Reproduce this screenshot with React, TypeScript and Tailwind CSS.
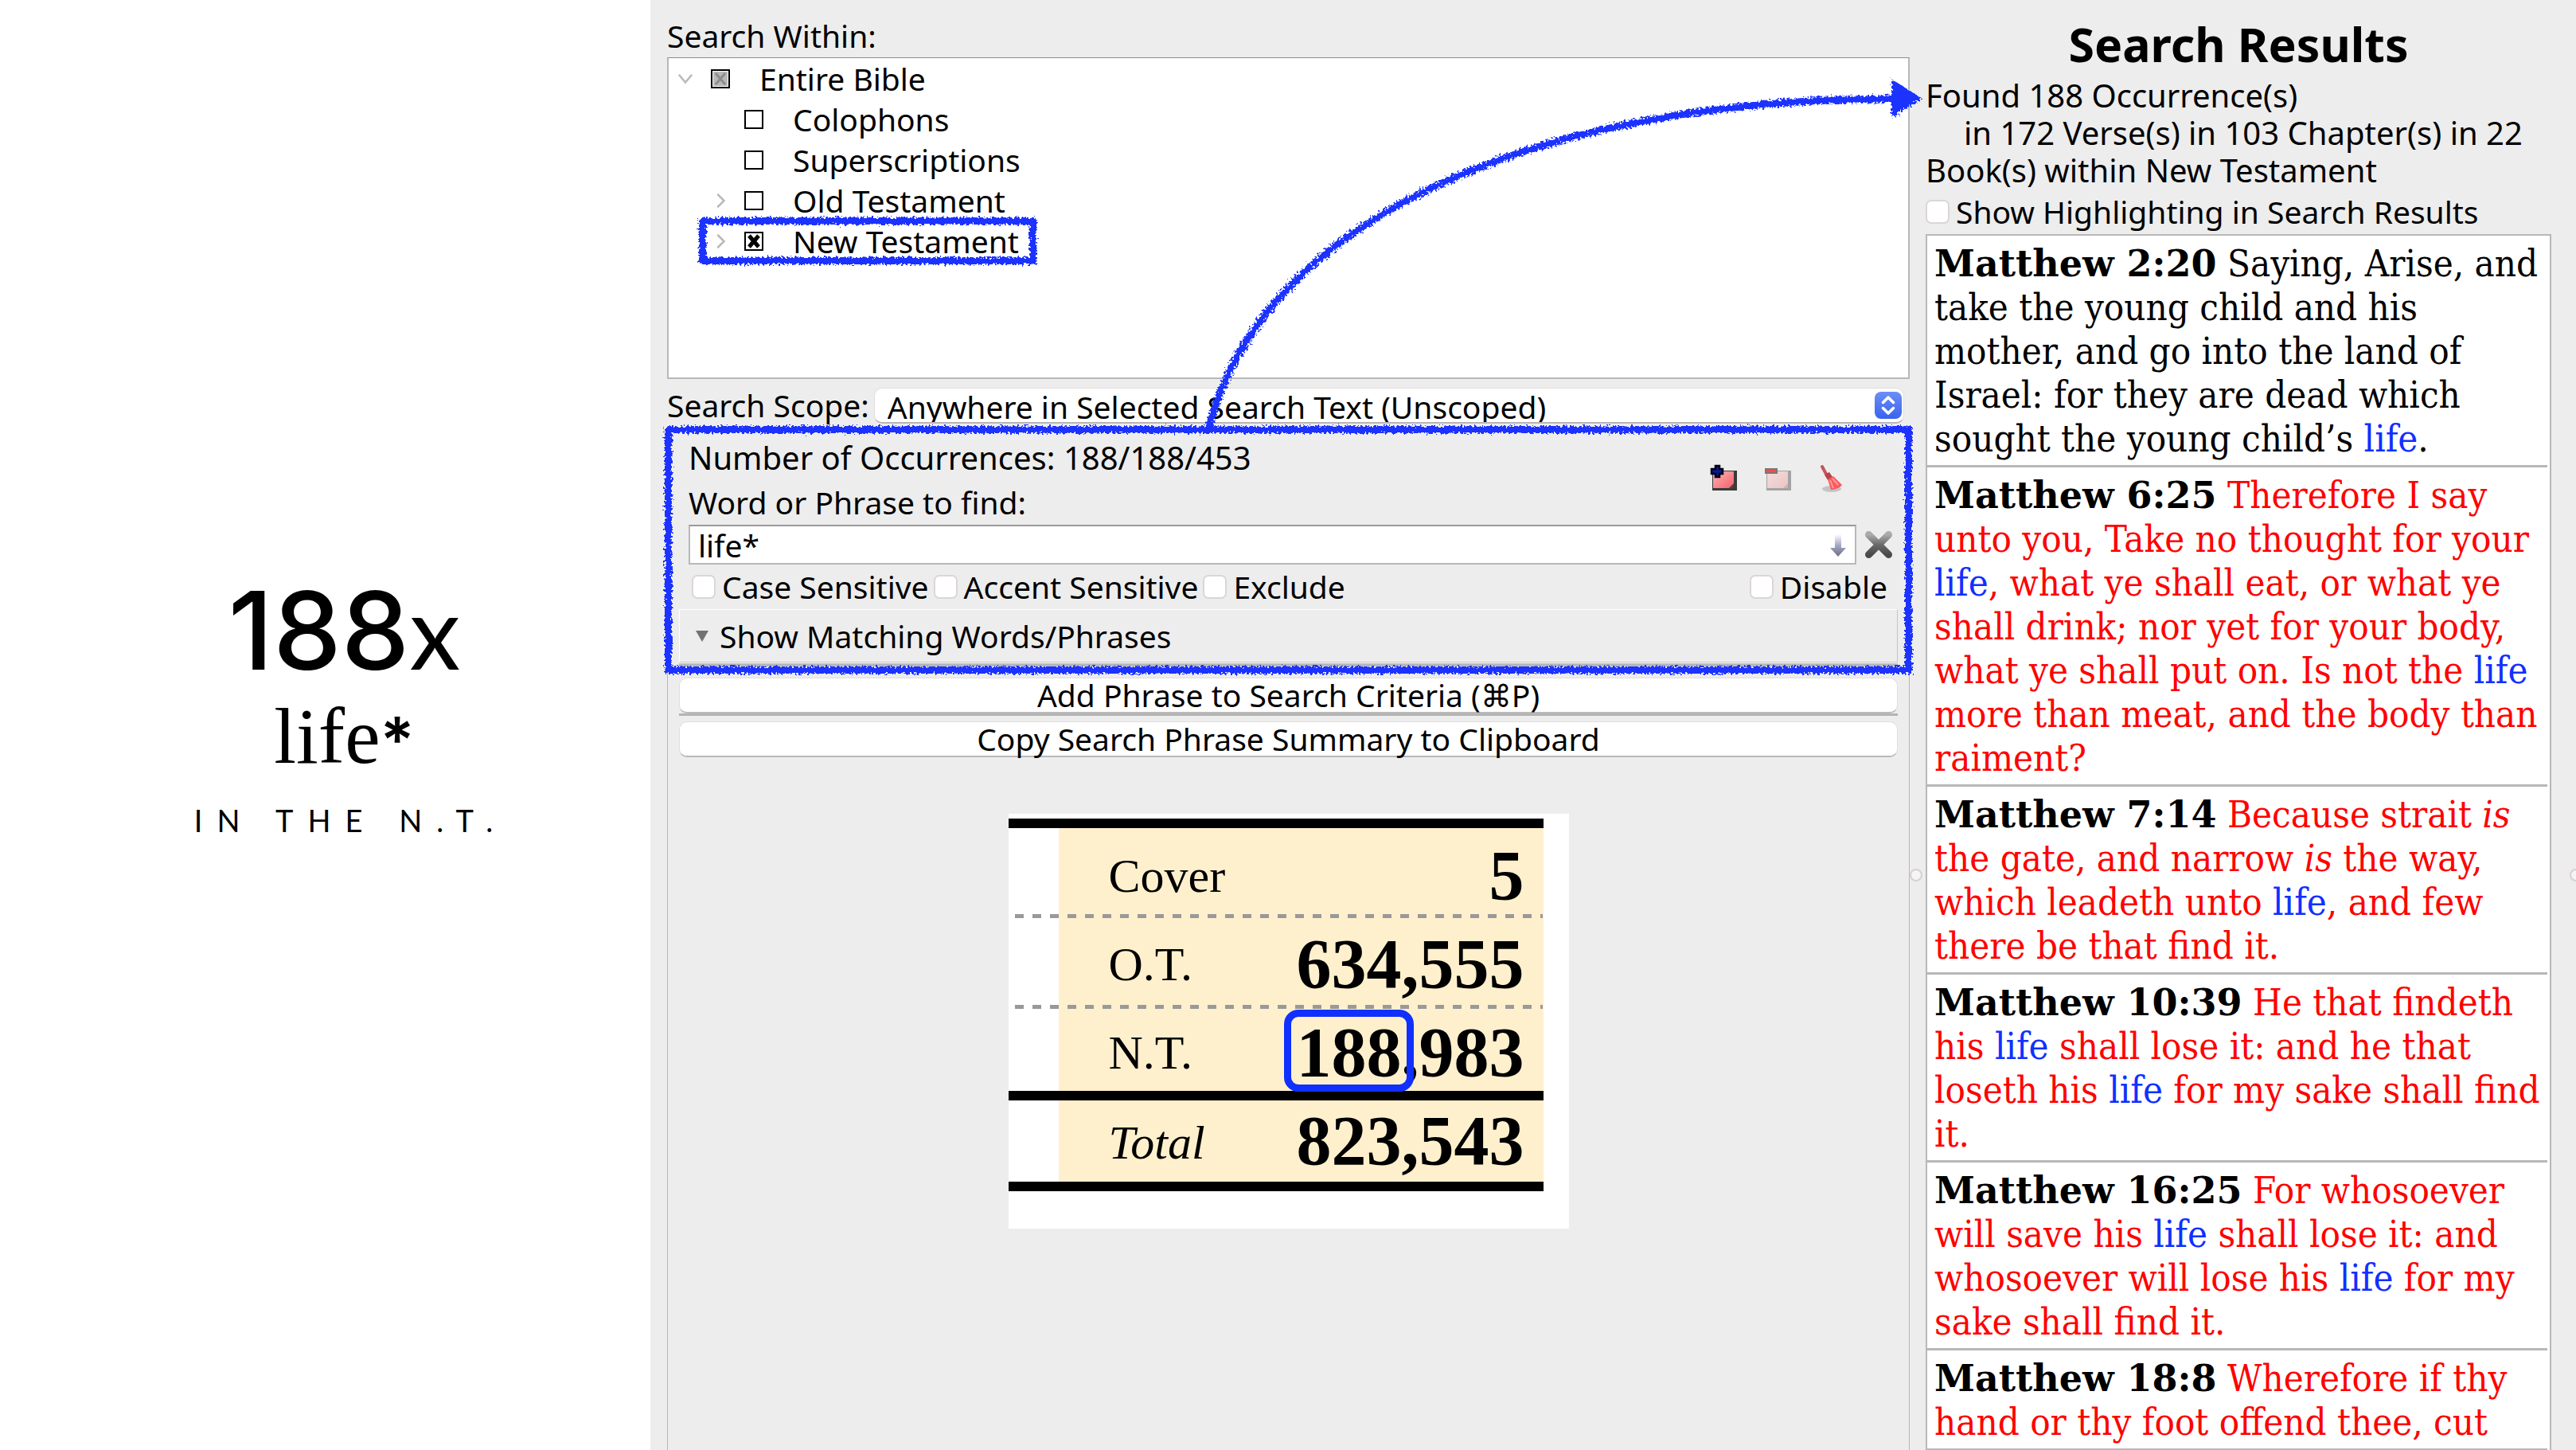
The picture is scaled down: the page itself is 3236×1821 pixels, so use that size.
import type { ReactNode } from "react";

interface Verse {
  reference: string;
  red?: boolean;
  text: ReactNode;
}

const Hit = () => <span className="text-[#1030ff]">life</span>;

const VERSES: Verse[] = [
  {
    reference: "Matthew 2:20",
    text: (
      <>
        Saying, Arise, and take the young child and his mother, and go into the land of Israel: for
        they are dead which sought the young child’s <Hit />.
      </>
    ),
  },
  {
    reference: "Matthew 6:25",
    red: true,
    text: (
      <>
        Therefore I say unto you, Take no thought for your <Hit />, what ye shall eat, or what ye
        shall drink; nor yet for your body, what ye shall put on. Is not the <Hit /> more than meat,
        and the body than raiment?
      </>
    ),
  },
  {
    reference: "Matthew 7:14",
    red: true,
    text: (
      <>
        Because strait <i>is</i> the gate, and narrow <i>is</i> the way, which leadeth unto <Hit />,
        and few there be that find it.
      </>
    ),
  },
  {
    reference: "Matthew 10:39",
    red: true,
    text: (
      <>
        He that findeth his <Hit /> shall lose it: and he that loseth his <Hit /> for my sake shall
        find it.
      </>
    ),
  },
  {
    reference: "Matthew 16:25",
    red: true,
    text: (
      <>
        For whosoever will save his <Hit /> shall lose it: and whosoever will lose his <Hit /> for
        my sake shall find it.
      </>
    ),
  },
  {
    reference: "Matthew 18:8",
    red: true,
    text: <>Wherefore if thy hand or thy foot offend thee, cut</>,
  },
];

export default function App() {
  return (
    <main className="relative grid h-screen grid-cols-[minmax(0,817fr)_minmax(0,1602fr)_minmax(0,817fr)] overflow-hidden bg-[#ededed] font-['Noto_Sans',sans-serif] text-[39px] text-black">
      <Caption />
      <SearchPanel />
      <ResultsPanel />
      <Annotation />
    </main>
  );
}

/* Left title slide */
function Caption() {
  return (
    <section className="flex flex-col items-center bg-white pt-[712px] pl-12">
      <h1 className="font-['Inter',sans-serif] text-[136px] leading-[160px] font-medium">
        188<span className="font-['Lato',sans-serif] text-[128px] font-normal">x</span>
      </h1>
      <p className="font-['Liberation_Serif',serif] text-[100px] leading-[106px]">
        life<span className="font-['Inter',sans-serif] text-[80px] leading-none font-semibold">*</span>
      </p>
      <p className="mt-[22px] pl-4 font-['Lato',sans-serif] text-[38px] leading-[60px] tracking-[18px]">
        IN THE N.T.
      </p>
    </section>
  );
}

/* Middle column */
function SearchPanel() {
  return (
    <section className="flex min-h-0 flex-col pt-[18px] pr-5 pl-[21px]">
      <h2 className="leading-[54px]">Search Within:</h2>
      <ul className="h-[404px] shrink-0 border-2 border-t border-[#b8b8b8] border-t-[#8c8c8c] bg-white pl-3">
        <TreeRow label="Entire Bible" state="partial" open />
        <TreeRow label="Colophons" child />
        <TreeRow label="Superscriptions" child />
        <TreeRow label="Old Testament" child expandable />
        <TreeRow label="New Testament" child expandable state="checked" marked />
      </ul>

      <div className="mt-[7px] flex items-center gap-[6px] pr-[7px]">
        <label htmlFor="scope" className="shrink-0 leading-[52px]">
          Search Scope:
        </label>
        <div className="relative min-w-0 flex-1">
          <select
            id="scope"
            className="block h-[45px] w-full appearance-none rounded-[10px] border border-b-2 border-[#e4dcdc] border-b-[#b8b4b4] bg-white px-4 leading-[45px]"
          >
            <option>Anywhere in Selected Search Text (Unscoped)</option>
          </select>
          <svg
            className="pointer-events-none absolute top-[5px] right-[3px] size-[34px]"
            viewBox="0 0 34 34"
            fill="none"
          >
            <defs>
              <linearGradient id="stepper" x1="0" y1="0" x2="0" y2="1">
                <stop offset="0" stopColor="#6c8ff5" />
                <stop offset="1" stopColor="#3a63f0" />
              </linearGradient>
            </defs>
            <rect width="34" height="34" rx="8" fill="url(#stepper)" />
            <path
              d="M10.500 13.500 17 7l6.500 6.500M10.500 20.500 17 27l6.500-6.500"
              stroke="#fff"
              strokeWidth="3.500"
              strokeLinecap="round"
              strokeLinejoin="round"
            />
          </svg>
        </div>
      </div>

      <div className="min-h-0 flex-1 border-x border-[#b8b8b8]">
        <PhraseBox />
        <div className="flex flex-col gap-[7px] px-[14px] pt-[5px]">
          <div className="border-b-[3px] border-[#b4b4b4]">
            <WideButton>Add Phrase to Search Criteria (⌘P)</WideButton>
          </div>
          <WideButton>Copy Search Phrase Summary to Clipboard</WideButton>
        </div>
        <TallyCard />
      </div>
    </section>
  );
}

interface TreeRowProps {
  label: string;
  state?: "checked" | "partial";
  open?: boolean;
  child?: boolean;
  expandable?: boolean;
  marked?: boolean;
}

function TreeRow({ label, state, open, child, expandable, marked }: TreeRowProps) {
  return (
    <li className={child ? "relative flex w-max items-center pl-[42px]" : "relative flex w-max items-center"}>
      <span className="flex w-[41px] items-center">
        {(open || expandable) && (
          <svg
            className="size-[18px]"
            viewBox="0 0 18 18"
            fill="none"
            stroke="#bdb8b8"
            strokeWidth="2.500"
            strokeLinecap="round"
          >
            <path d={open ? "M1.500 4.500 9 13.500l7.500-9" : "M8 1.500l7.500 7.500L8 16.500"} />
          </svg>
        )}
      </span>
      <label className="flex items-center gap-[37px] leading-[51px]">
        <span className="relative size-6">
          <input
            type="checkbox"
            defaultChecked={state === "checked"}
            className="block size-6 appearance-none border-2 border-black bg-white"
          />
          {state && (
            <svg className="pointer-events-none absolute inset-0 size-6" viewBox="0 0 24 24">
              {state === "partial" && <rect x="3" y="3" width="18" height="18" fill="#b9b9b9" />}
              <path
                d="M6 5l12 14M18 5 6 19"
                stroke={state === "partial" ? "#8d8d8d" : "#000"}
                strokeWidth={state === "partial" ? 3 : 5}
              />
            </svg>
          )}
        </span>
        {label}
      </label>
      {marked && (
        <span className="pointer-events-none absolute -top-[4px] -right-[22px] -bottom-[4px] left-[26px] border-[9px] border-[#1a32ff] filter-[url(#crayon)]" />
      )}
    </li>
  );
}

function PhraseBox() {
  return (
    <div className="relative pt-3">
      <div className="pr-[20px] pl-[26px]">
        <div className="flex items-center justify-between pr-[58px]">
          <div className="leading-[56px]">
            <p className="text-[40px]">Number of Occurrences: 188/188/453</p>
            <label htmlFor="phrase" className="block">
              Word or Phrase to find:
            </label>
          </div>
          <div className="flex gap-8 pb-1">
            <button type="button" aria-label="Add phrase" className="size-9">
              <NoteIcon />
            </button>
            <button type="button" aria-label="Remove phrase" className="size-9">
              <NoteIcon faded />
            </button>
            <button type="button" aria-label="Clear phrases" className="size-9">
              <BroomIcon />
            </button>
          </div>
        </div>

        <div className="flex items-center gap-[10px]">
          <div className="relative min-w-0 flex-1">
            <input
              id="phrase"
              type="text"
              defaultValue="life*"
              className="block h-[50px] w-full border-2 border-[#b8b8b8] border-t-[#999] bg-white px-[10px] leading-[46px]"
            />
            <svg className="pointer-events-none absolute top-3 right-[13px] h-7 w-5" viewBox="0 0 20 28">
              <defs>
                <linearGradient id="shaft" x1="0" y1="0" x2="0" y2="1">
                  <stop offset="0" stopColor="#fff" />
                  <stop offset="0.500" stopColor="#a3a6c8" />
                  <stop offset="1" stopColor="#6d6f7c" />
                </linearGradient>
              </defs>
              <path d="M6 0h8v17h6L10 28 0 17h6z" fill="url(#shaft)" />
            </svg>
          </div>
          <button type="button" aria-label="Delete phrase" className="size-9">
            <svg viewBox="0 0 36 36" strokeLinecap="round" fill="none">
              <defs>
                <linearGradient id="cross" x1="0" y1="0" x2="0" y2="1">
                  <stop offset="0" stopColor="#ababab" />
                  <stop offset="0.500" stopColor="#6a6a6a" />
                  <stop offset="1" stopColor="#4a4a4a" />
                </linearGradient>
              </defs>
              <path d="M5.500 5.500l25 25M30.500 5.500l-25 25" stroke="url(#cross)" strokeWidth="9" />
            </svg>
          </button>
        </div>

        <div className="flex items-center justify-between pr-[7px] pl-1 leading-[56px]">
          <div className="flex gap-[6px]">
            <Check label="Case Sensitive" />
            <Check label="Accent Sensitive" />
            <Check label="Exclude" />
          </div>
          <Check label="Disable" />
        </div>
      </div>

      <div className="px-[14px] pb-[9px]">
        <button
          type="button"
          className="flex w-full items-center gap-[14px] border border-[#c4c4c4] border-t-white border-l-white pl-5 leading-[65px]"
        >
          <svg className="h-[14px] w-4" viewBox="0 0 16 14">
            <path d="M0 0h16L8 14z" fill="#727272" />
          </svg>
          Show Matching Words/Phrases
        </button>
        <div className="h-[5px] border-t border-white bg-[#b8b8b8]" />
      </div>
      <span className="pointer-events-none absolute -inset-x-[4px] inset-y-0 border-[9px] border-[#1a32ff] filter-[url(#crayon)]" />
    </div>
  );
}

function Check({ label }: { label: string }) {
  return (
    <label className="flex items-center gap-2">
      <input
        type="checkbox"
        className="size-[30px] appearance-none rounded-[7px] border-2 border-[#dcd6d6] bg-white"
      />
      {label}
    </label>
  );
}

function WideButton({ children }: { children: ReactNode }) {
  return (
    <button
      type="button"
      className="block h-[45px] w-full rounded-[10px] border border-b-2 border-[#e4dcdc] border-b-[#bcb8b8] bg-white leading-[40px]"
    >
      {children}
    </button>
  );
}

function NoteIcon({ faded }: { faded?: boolean }) {
  return (
    <svg viewBox="0 0 36 36">
      <defs>
        <linearGradient id={faded ? "noteFaded" : "note"} x1="0" y1="0" x2="1" y2="1">
          <stop offset="0" stopColor={faded ? "#f3dcdc" : "#ffb4b4"} />
          <stop offset="1" stopColor={faded ? "#ecc4c4" : "#f4606a"} />
        </linearGradient>
      </defs>
      <path d="M3 8h31v25H3z" fill={faded ? "#a3a3a3" : "#3a3a3a"} />
      <path d="M4 9h26v21H4z" fill={faded ? "url(#noteFaded)" : "url(#note)"} />
      <path d="M24 30l6-6v6z" fill={faded ? "#c9b5b5" : "#5c3a3a"} />
      {faded ? (
        <path d="M2 6h14v5H2z" fill="#ff4a4a" stroke="#777" strokeWidth="2" />
      ) : (
        <path
          d="M7 2h5v4h4v6h-4v4H7v-4H2V6h5z"
          fill="#0a1a8a"
          stroke="#000018"
          strokeWidth="2.500"
        />
      )}
    </svg>
  );
}

function BroomIcon() {
  return (
    <svg viewBox="0 0 36 36">
      <ellipse cx="17" cy="31" rx="12" ry="4" fill="#c4c4c4" />
      <path d="M5 3l7 13" stroke="#c9545a" strokeWidth="4" strokeLinecap="round" />
      <path d="M8 13l6-3 4 6-6 4z" fill="#b8434a" />
      <path d="M12 19l7-4 11 11c-3 4-10 6-14 6z" fill="#fa5a60" />
      <path d="M15 20l4 10M18 18l7 8" stroke="#ff9a9a" strokeWidth="2" />
    </svg>
  );
}

/* Word count table, centred below the buttons */
function TallyCard() {
  return (
    <div className="mx-auto mt-[71px] h-[521px] w-[704px] bg-white pt-[6px] pr-8 font-['Liberation_Serif',serif]">
      <table className="w-full border-collapse">
        <tbody>
          <TallyRow label="Cover" count="5" line="h-[114px] border-t-[12px] border-black" />
          <TallyRow label="O.T." count="634,555" line="h-[114px]" dashed />
          <TallyRow
            label="N.T."
            line="h-[114px]"
            dashed
            count={
              <>
                <span className="relative">
                  188
                  <span className="absolute -top-[5px] -right-[15px] -left-[16px] h-[103px] rounded-[18px] border-[9px] border-[#1030ff]" />
                </span>
                ,983
              </>
            }
          />
          <TallyRow
            label={<i>Total</i>}
            count="823,543"
            line="h-[114px] border-y-[12px] border-black"
            total
          />
        </tbody>
      </table>
    </div>
  );
}

interface TallyRowProps {
  label: ReactNode;
  count: ReactNode;
  line: string;
  dashed?: boolean;
  total?: boolean;
}

function TallyRow({ label, count, line, dashed, total }: TallyRowProps) {
  return (
    <tr className={line}>
      <td className="relative w-[63px] p-0">
        {dashed && (
          <span className="absolute top-0 left-2 h-[5px] w-[663px] bg-[repeating-linear-gradient(90deg,#999_0_11px,transparent_11px_22px)]" />
        )}
      </td>
      <th scope="row" className="bg-[#fff0cd] p-0 pl-[63px] text-left text-[60px] leading-[80px] font-normal">
        <div className={total ? "pt-1" : "pt-3"}>{label}</div>
      </th>
      <td className="bg-[#fff0cd] p-0 pr-6 text-right text-[88px] leading-[90px] font-bold">
        <div className={total ? "pt-0" : "pt-3"}>{count}</div>
      </td>
    </tr>
  );
}

/* Right column */
function ResultsPanel() {
  return (
    <section className="relative flex min-h-0 flex-col pt-[14px] pr-[31px]">
      <h2 className="text-center text-[59px] leading-[82px] font-bold">Search Results</h2>
      <p className="text-[40px] leading-[47px]">
        Found 188 Occurrence(s)
        <br />
        <span className="pl-12">in 172 Verse(s) in 103 Chapter(s) in 22</span>
        <br />
        Book(s) within New Testament
      </p>
      <div className="flex leading-[57px]">
        <Check label="Show Highlighting in Search Results" />
      </div>
      <div className="min-h-0 flex-1 overflow-hidden border-x-2 border-t-2 border-[#b8b8b8] bg-white pr-[3px] font-['DejaVu_Serif_Condensed','DejaVu_Serif',serif] text-[47px] leading-[55px]">
        {VERSES.map((verse) => (
          <p
            key={verse.reference}
            className={
              verse.red
                ? "border-b-[3px] border-[#b8b8b8] pt-[7px] pb-[6px] pl-[9px] text-[#ff0000]"
                : "border-b-[3px] border-[#b8b8b8] pt-[7px] pb-[6px] pl-[9px]"
            }
          >
            <b className="font-['DejaVu_Serif',serif] text-[46px] leading-none text-black">
              {verse.reference}
            </b>{" "}
            {verse.text}
          </p>
        ))}
      </div>
      <span className="absolute top-[1091px] -left-5 size-4 rounded-full border-2 border-[#d8d0d0] bg-[#f6f4f4]" />
      <span className="absolute top-[1091px] -right-2 size-4 rounded-full border-2 border-[#d8d0d0] bg-[#f6f4f4]" />
    </section>
  );
}

/* Hand drawn arrow from the phrase box to the result summary */
function Annotation() {
  return (
    <svg
      className="pointer-events-none absolute inset-0 size-full"
      viewBox="0 0 3236 1821"
      preserveAspectRatio="none"
    >
      <defs>
        <filter id="crayon" x="-5%" y="-5%" width="110%" height="110%">
          <feTurbulence type="fractalNoise" baseFrequency="0.350" numOctaves="2" seed="4" result="noise" />
          <feDisplacementMap in="SourceGraphic" in2="noise" scale="9" />
        </filter>
      </defs>
      <g filter="url(#crayon)">
        <path
          d="M1518 538C1590 260 1960 124 2380 124"
          fill="none"
          stroke="#1a32ff"
          strokeWidth="9"
        />
        <path d="M2377 101v45l36-22z" fill="#1a32ff" stroke="#1a32ff" strokeWidth="2" />
      </g>
    </svg>
  );
}
